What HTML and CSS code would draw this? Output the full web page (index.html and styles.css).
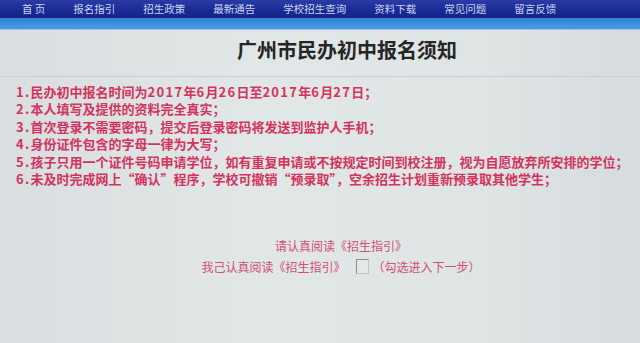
FILE: index.html
```html
<!DOCTYPE html>
<html lang="zh-CN">
<head>
<meta charset="utf-8">
<title>广州市民办初中报名须知</title>
<link rel="stylesheet" href="styles.css">
</head>
<body>
<nav class="nav">
  <a class="nav-item">首 页</a>
  <a class="nav-item">报名指引</a>
  <a class="nav-item">招生政策</a>
  <a class="nav-item">最新通告</a>
  <a class="nav-item">学校招生查询</a>
  <a class="nav-item">资料下载</a>
  <a class="nav-item">常见问题</a>
  <a class="nav-item">留言反馈</a>
</nav>
<div class="stripe"></div>
<main class="page">
  <header class="head">
    <h1 class="title">广州市民办初中报名须知</h1>
  </header>
  <ol class="rules">
    <li><span class="num">1.</span>民办初中报名时间为<span class="num">2017</span>年<span class="num">6</span>月<span class="num">26</span>日至<span class="num">2017</span>年<span class="num">6</span>月<span class="num">27</span>日；</li>
    <li><span class="num">2.</span>本人填写及提供的资料完全真实；</li>
    <li><span class="num">3.</span>首次登录不需要密码，提交后登录密码将发送到监护人手机；</li>
    <li><span class="num">4.</span>身份证件包含的字母一律为大写；</li>
    <li><span class="num">5.</span>孩子只用一个证件号码申请学位，如有重复申请或不按规定时间到校注册，视为自愿放弃所安排的学位；</li>
    <li><span class="num">6.</span>未及时完成网上“确认”程序，学校可撤销“预录取”，空余招生计划重新预录取其他学生；</li>
  </ol>
  <section class="confirm">
    <p class="confirm-line">请认真阅读《招生指引》</p>
    <p class="confirm-line check-line">我己认真阅读《招生指引》<span class="box"></span>（勾选进入下一步）</p>
  </section>
</main>
</body>
</html>
```
FILE: styles.css
```css
html, body {
  margin: 0;
  padding: 0;
}
body {
  width: 640px;
  height: 343px;
  overflow: hidden;
  background: linear-gradient(90deg, #d9dfe0 0%, #e1e6e6 40%, #dfe4e4 75%, #d6dcdf 100%);
  font-family: "Noto Sans CJK SC", "Noto Sans", sans-serif;
}
.nav {
  height: 18px;
  background: linear-gradient(180deg, #2a3ba6 0%, #1a2a93 60%, #15238a 100%);
  display: flex;
  align-items: center;
  padding-left: 22px;
  gap: 28px;
}
.nav-item {
  color: #c9d3f2;
  font-size: 10.5px;
  line-height: 18px;
  white-space: nowrap;
}
.stripe {
  height: 11px;
  background: linear-gradient(180deg, #3480d2 0%, #3f93de 60%, #4a9ce3 100%);
  border-bottom: 1px solid #9cc3e6;
}
.page {
  display: block;
}
.head {
  padding: 6px 0 12px 54px;
  border-bottom: 1px solid #c9cfd0;
}
.title {
  margin: 0;
  text-align: center;
  font-size: 20px;
  line-height: 28px;
  font-weight: 700;
  color: #262626;
}
.rules {
  list-style: none;
  margin: 6px 0 0 0;
  padding: 0 0 0 16px;
}
.rules li {
  font-size: 13px;
  line-height: 17.4px;
  font-weight: 700;
  color: #d3335d;
  white-space: nowrap;
}
.num {
  letter-spacing: 1.3px;
}
.confirm {
  margin-top: 48px;
  padding-left: 42px;
  display: flex;
  flex-direction: column;
  align-items: center;
}
.confirm-line {
  margin: 0;
  font-size: 12px;
  line-height: 21px;
  color: #d14f78;
  white-space: nowrap;
}
.check-line {
  display: flex;
  align-items: center;
}
.box {
  display: inline-block;
  width: 11px;
  height: 13px;
  margin: 0 4px 0 10px;
  border: 1px solid #8a8f92;
  border-right-color: #c4c8ca;
  border-bottom-color: #c4c8ca;
  background: #e4e8e8;
}
```
